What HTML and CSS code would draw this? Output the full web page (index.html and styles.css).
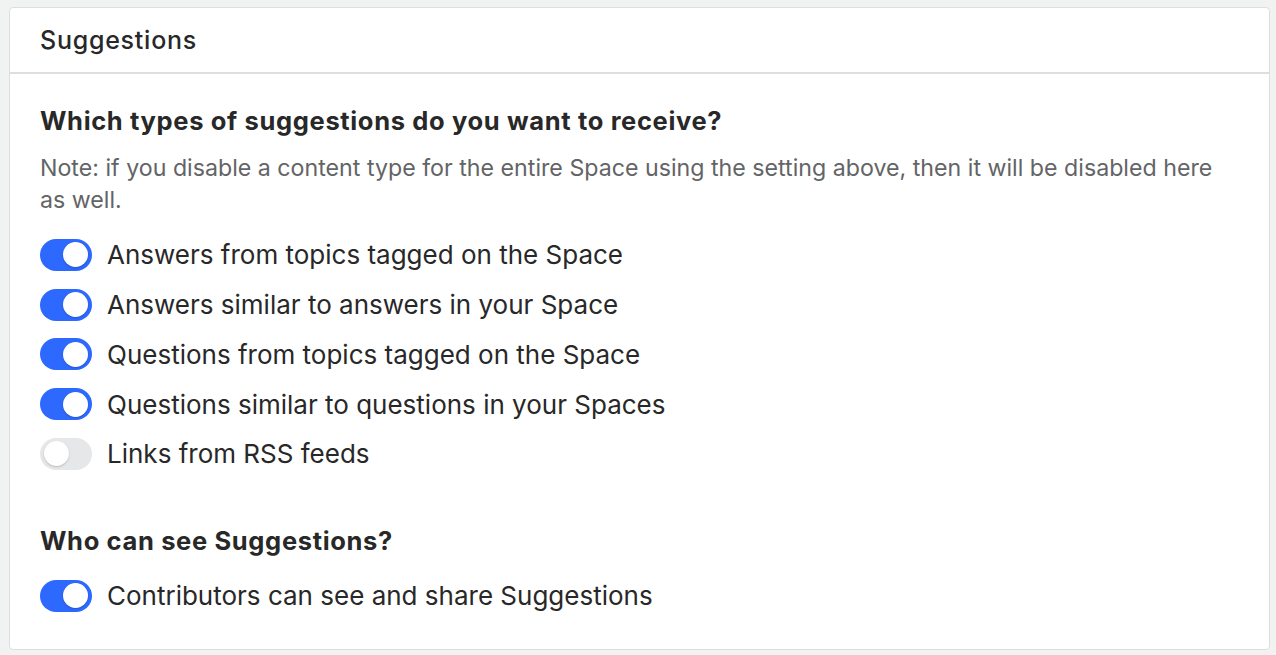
FILE: index.html
```html
<!DOCTYPE html>
<html>
<head>
<meta charset="utf-8">
<link rel="stylesheet" href="styles.css">
</head>
<body>
<div class="card">
  <div class="card-header">Suggestions</div>
  <div class="card-body">
    <h2 class="section-title">Which types of suggestions do you want to receive?</h2>
    <p class="note">Note: if you disable a content type for the entire Space using the setting above, then it will be disabled here as well.</p>
    <ul class="toggle-list">
      <li class="toggle-row"><span class="toggle on"><span class="knob"></span></span><span class="label">Answers from topics tagged on the Space</span></li>
      <li class="toggle-row"><span class="toggle on"><span class="knob"></span></span><span class="label">Answers similar to answers in your Space</span></li>
      <li class="toggle-row"><span class="toggle on"><span class="knob"></span></span><span class="label">Questions from topics tagged on the Space</span></li>
      <li class="toggle-row"><span class="toggle on"><span class="knob"></span></span><span class="label">Questions similar to questions in your Spaces</span></li>
      <li class="toggle-row"><span class="toggle off"><span class="knob"></span></span><span class="label">Links from RSS feeds</span></li>
    </ul>
    <h2 class="section-title second">Who can see Suggestions?</h2>
    <ul class="toggle-list">
      <li class="toggle-row"><span class="toggle on"><span class="knob"></span></span><span class="label">Contributors can see and share Suggestions</span></li>
    </ul>
  </div>
</div>
</body>
</html>
```
FILE: styles.css
```css
html, body {
  margin: 0;
  padding: 0;
}
body {
  background: #f1f2f2;
  font-family: Inter, "Noto Sans", sans-serif;
  color: #282829;
  padding: 7px 6px 0 9px;
}
.card {
  background: #fff;
  border: 1px solid #dedede;
  border-radius: 4px;
  height: 643px;
  box-sizing: border-box;
}
.card-header {
  height: 66px;
  box-sizing: border-box;
  border-bottom: 2px solid #dedede;
  padding: 0 30px;
  display: flex;
  align-items: center;
  font-size: 25px;
  font-weight: 500;
  letter-spacing: 0.75px;
}
.card-body {
  padding: 32px 30px 0;
}
.section-title {
  margin: 0;
  font-size: 25.5px;
  font-weight: 700;
  line-height: 30px;
  letter-spacing: 0.65px;
}
.section-title.second {
  margin-top: 47px;
}
.note {
  margin: 16px 0 14px;
  font-size: 23.2px;
  line-height: 32px;
  color: #636466;
}
.toggle-list {
  list-style: none;
  margin: 0;
  padding: 0;
}
.toggle-row {
  display: flex;
  align-items: center;
  height: 49.75px;
  gap: 15px;
}
.second + .toggle-list {
  margin-top: 15px;
}
.toggle {
  width: 52px;
  height: 32px;
  border-radius: 16px;
  box-sizing: border-box;
  display: flex;
  align-items: center;
  padding: 0 4px;
  flex: none;
}
.toggle.on {
  background: #2e69ff;
  justify-content: flex-end;
}
.toggle.off {
  background: #e6e7e8;
  justify-content: flex-start;
}
.knob {
  width: 25px;
  height: 25px;
  border-radius: 50%;
  background: #fff;
  box-shadow: 0 1px 2px rgba(0,0,0,0.2);
}
.label {
  font-size: 26px;
}
```
